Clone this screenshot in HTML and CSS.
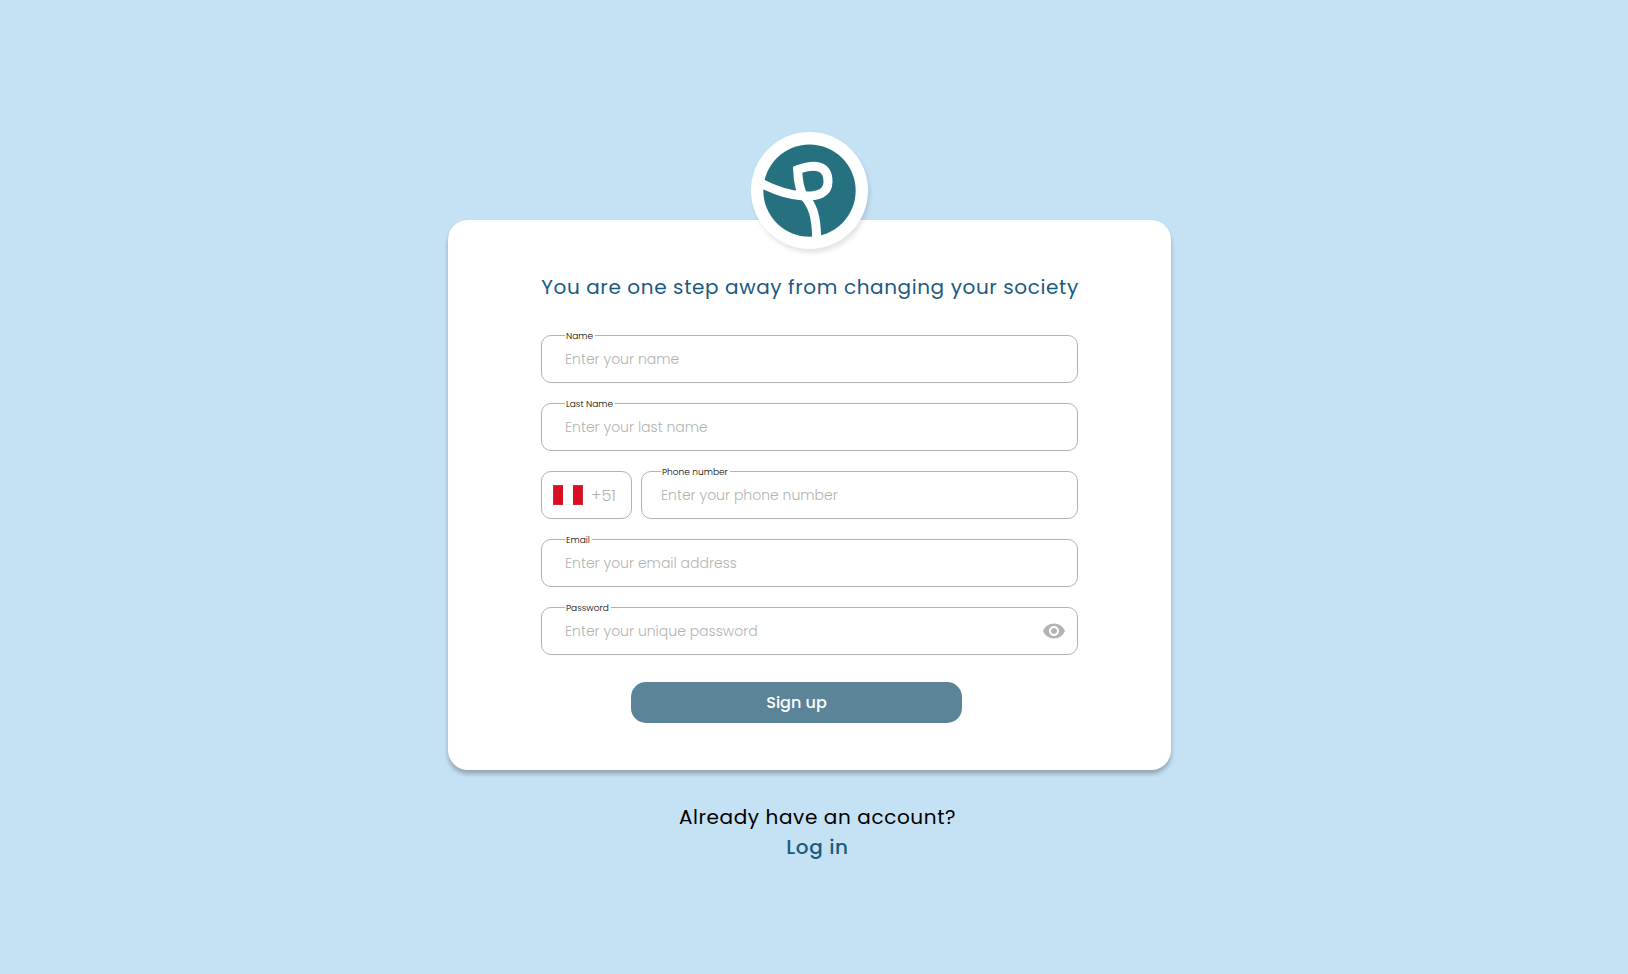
FILE: index.html
```html
<!DOCTYPE html>
<html lang="en">
<head>
<meta charset="utf-8">
<title>Sign up</title>
<link rel="stylesheet" href="styles.css">
</head>
<body>
<main class="page">
  <section class="card">
    <div class="logo">
      <svg class="logo-mark" viewBox="70 71 279 279">
        <circle cx="209.500" cy="211" r="138.500" fill="#26717f"/>
        <path d="M62 188C105 210 150 225 190 227C238 229 265 217 265 184C265 131 220 130 174 148C175 178 180 208 191 225C219 253 231 288 231 362" fill="none" stroke="#fff" stroke-width="27" stroke-miterlimit="8"/>
      </svg>
    </div>
    <h1 class="title">You are one step away from changing your society</h1>
    <form class="form">
      <div class="field"><label class="label" for="name">Name</label><input class="input" id="name" placeholder="Enter your name"></div>
      <div class="field"><label class="label" for="last">Last Name</label><input class="input" id="last" placeholder="Enter your last name"></div>
      <div class="row">
        <div class="country"><span class="flag"></span><span class="code">+51</span></div>
        <div class="field field-phone"><label class="label label-phone" for="phone">Phone number</label><input class="input input-phone" id="phone" placeholder="Enter your phone number"></div>
      </div>
      <div class="field"><label class="label" for="email">Email</label><input class="input" id="email" placeholder="Enter your email address"></div>
      <div class="field"><label class="label" for="password">Password</label><input class="input" id="password" type="password" placeholder="Enter your unique password">
        <svg class="eye" viewBox="0 0 24 24"><path fill="#b3b3b3" d="M12 4.500C7 4.500 2.730 7.610 1 12c1.730 4.390 6 7.500 11 7.500s9.270-3.110 11-7.500c-1.730-4.390-6-7.500-11-7.500zM12 17c-2.760 0-5-2.240-5-5s2.240-5 5-5 5 2.240 5 5-2.240 5-5 5zm0-8c-1.660 0-3 1.340-3 3s1.340 3 3 3 3-1.340 3-3-1.340-3-3-3z"/></svg>
      </div>
      <button class="submit" type="button">Sign up</button>
    </form>
  </section>
  <footer class="footer">
    <span class="question">Already have an account?</span>
    <a class="login">Log in</a>
  </footer>
</main>
</body>
</html>
```
FILE: styles.css
```css
* { box-sizing: border-box; }
body {
  margin: 0;
  background: #c5e1f4;
  font-family: Poppins, Inter, sans-serif;
}
.page {
  height: 974px;
  padding: 220px 0 0 448px;
  overflow: hidden;
}
.card {
  width: 723px;
  height: 550px;
  background: #fff;
  border-radius: 20px;
  box-shadow: 0 4px 4px rgba(0, 0, 0, 0.25);
  display: flex;
  flex-direction: column;
  align-items: center;
}
.logo {
  flex: none;
  width: 117px;
  height: 117px;
  margin: -88px 0 0 0.5px;
  background: #fff;
  border-radius: 50%;
  box-shadow: 2px 4px 4px rgba(0, 0, 0, 0.1);
  display: flex;
  align-items: center;
  justify-content: center;
}
.logo-mark { width: 93px; height: 93px; display: block; }
.title {
  margin: 23px 0 0 1px;
  font-size: 20px;
  font-weight: 400;
  line-height: 30px;
  letter-spacing: 0.6px;
  white-space: nowrap;
  color: #1b5a80;
}
.form { width: 537px; margin-top: 33px; display: flex; flex-direction: column; gap: 20px; }
.row { display: flex; gap: 9px; }
.field { position: relative; height: 48px; }
.field-phone { flex: 1; }
.input {
  display: block;
  width: 100%;
  height: 48px;
  padding: 0 23px;
  border: 1px solid #b3b3b3;
  border-radius: 10px;
  background: #fff;
  font-family: inherit;
  font-size: 14px;
  font-weight: 300;
  outline: none;
}
.input-phone { padding-left: 19px; }
.input::placeholder { color: #b3b3b3; opacity: 1; }
.label {
  position: absolute;
  top: -5px;
  left: 24px;
  padding: 0 2px 0 1px;
  background: #fff;
  font-size: 9px;
  font-weight: 300;
  line-height: 13px;
  color: #000;
  white-space: nowrap;
}
.label-phone { left: 20px; }
.country {
  width: 91px;
  height: 48px;
  border: 1px solid #b3b3b3;
  border-radius: 10px;
  padding-left: 11px;
  display: flex;
  align-items: center;
  gap: 8px;
}
.flag {
  width: 30px;
  height: 20px;
  background: linear-gradient(90deg, #d91023 0 10px, #fff 10px 20px, #d91023 20px);
  box-shadow: inset 0 0 0 0.5px rgba(180, 180, 180, 0.3);
}
.code { font-size: 16px; font-weight: 300; color: #b3b3b3; }
.eye { position: absolute; right: 12px; top: 12px; width: 24px; height: 24px; }
.submit {
  width: 331px;
  height: 41px;
  margin: 7px 0 0 90px;
  padding: 0;
  border: 0;
  border-radius: 15px;
  background: #5c8499;
  color: #fff;
  font-family: inherit;
  font-size: 16px;
  font-weight: 500;
}
.footer {
  width: 723px;
  padding: 32px 0 0 16px;
  display: flex;
  flex-direction: column;
  align-items: center;
  font-size: 20px;
  line-height: 30px;
  letter-spacing: 0.6px;
}
.login { color: #1b5a80; font-weight: 500; }
```
